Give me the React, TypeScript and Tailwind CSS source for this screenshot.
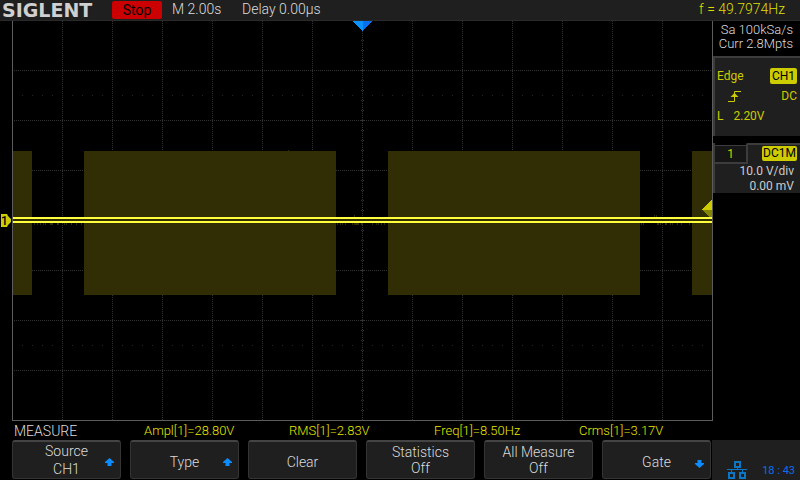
import React from 'react';
import clsx from 'clsx';

interface SoftKey {
  label: string;
  value?: string;
  arrow?: 'up' | 'down';
}

const softKeys: SoftKey[] = [
  { label: 'Source', value: 'CH1', arrow: 'up' },
  { label: 'Type', arrow: 'up' },
  { label: 'Clear' },
  { label: 'Statistics', value: 'Off' },
  { label: 'All Measure', value: 'Off' },
  { label: 'Gate', arrow: 'down' },
];

const measurements = ['Ampl[1]=28.80V', 'RMS[1]=2.83V', 'Freq[1]=8.50Hz', 'Crms[1]=3.17V'];

const columns = Array.from({ length: 13 }, (_, i) => (i + 1) * 50);
const rows = Array.from({ length: 7 }, (_, i) => 49 + i * 50);
const ticks = Array.from({ length: 38 }, (_, i) => 19 + i * 10);

// Burst envelopes: [x, width]
const bursts = [
  [1, 19],
  [72, 252],
  [376, 252],
  [680, 20],
];

// Noise specks just under the trace, between bursts
const noise = [
  [22, 1], [25, 1], [28, 1], [31, 1], [33, 1], [38, 3], [45, 2], [52, 1], [54, 1], [59, 1], [64, 1], [69, 1],
  [325, 1], [328, 1], [330, 1], [333, 1], [340, 1], [342, 5], [349, 2], [360, 1], [364, 1], [366, 1], [369, 1], [372, 1],
  [629, 1], [631, 1], [645, 2], [648, 1], [653, 2], [658, 1], [660, 1], [665, 1], [669, 1], [677, 1],
];

function Graticule() {
  return (
    <svg
      className="block h-[400px] w-full"
      viewBox="0 0 701 400"
      preserveAspectRatio="none"
      shapeRendering="crispEdges"
      role="img"
      aria-label="Channel 1 waveform"
    >
      <g stroke="#323232" strokeDasharray="1 1">
        {columns.map(x => (
          <line key={x} x1={x + 0.5} x2={x + 0.5} y1="0" y2="399" />
        ))}
        {rows.map(y => (
          <line key={y} x1="2" x2="700" y1={y + 0.5} y2={y + 0.5} />
        ))}
      </g>
      <g stroke="#262626" strokeDasharray="1 9">
        <line x1="10" x2="700" y1="74.5" y2="74.5" />
        <line x1="10" x2="700" y1="324.5" y2="324.5" />
      </g>
      {/* Minor divisions on the centre axis */}
      <g fill="#323232">
        {ticks.map(y => (
          <path key={y} d={`M349 ${y}h1v1h-1zM351 ${y}h1v1h-1z`} />
        ))}
      </g>

      {/* Waveform */}
      <g fill="#312d05">
        {bursts.map(([x, w]) => (
          <rect key={x} x={x} y="130" width={w} height="144" />
        ))}
        <rect x="276" y="129" width="1" height="1" />
        {noise.map(([x, w]) => (
          <rect key={x} x={x} y="202" width={w} height="2" />
        ))}
        <rect x="342" y="194" width="1" height="2" />
        <rect x="642" y="194" width="1" height="2" />
        <rect x="644" y="194" width="1" height="2" />
        <rect x="1" y="198" width="699" height="2" />
      </g>
      <polygon points="690,188.5 700,178.5 700,188.5" fill="#cccc00" />
      <polygon points="690,188.5 700,188.5 700,198.5" fill="#858500" />
      <rect x="1" y="196" width="699" height="2" fill="#ffff3c" />
      <rect x="1" y="200" width="699" height="2" fill="#ffff3c" />

      {/* Trigger position */}
      <polygon points="341,0 350.5,0 350.5,10" fill="#0c92ff" />
      <polygon points="350.5,0 360,0 350.5,10" fill="#0670f0" />

      <path d="M0.5 0V399.5H700.5V0" fill="none" stroke="#5c5c5c" />
    </svg>
  );
}

function ChannelMarker() {
  return (
    <svg className="block h-[13px] w-3" viewBox="0 0 12 13" role="img" aria-label="Channel 1 ground level">
      <path d="M1 0H7L8 2L11 5V8L8 11L7 13H1Z" fill="#cccc00" />
      <text x="1" y="11" fontSize="12" fontWeight="500" fill="#000">1</text>
    </svg>
  );
}

function RisingEdgeIcon() {
  return (
    <svg width="14" height="13" viewBox="0 0 14 13" fill="none" stroke="#cccc00" aria-label="Rising edge">
      <path d="M0 11.5H6.5V1.5H13" />
      <path d="M2.5 7H10.5L6.5 3Z" fill="#cccc00" stroke="none" />
    </svg>
  );
}

function NetworkIcon() {
  return (
    <svg width="20" height="18" viewBox="0 0 20 18" fill="none" stroke="#0a76c4" shapeRendering="crispEdges" aria-label="LAN">
      <path d="M8 1H13V6H8Z" strokeWidth="2" />
      <path d="M0 8.5H20M10.5 6V9M4.5 9V12M15.5 9V12" />
      <path d="M2 12H7V17H2ZM13 12H18V17H13Z" strokeWidth="2" />
    </svg>
  );
}

function ArrowIcon({ direction }: { direction: 'up' | 'down' }) {
  return (
    <svg
      className={clsx('absolute right-1.5', direction === 'up' ? 'top-4' : 'top-[18px] rotate-180')}
      width="9"
      height="8"
      viewBox="0 0 9 8"
      aria-hidden="true"
    >
      <path d="M4.5 0L9 4V5H6.5V8H2.5V5H0V4Z" fill="#0c8cff" />
    </svg>
  );
}

function SoftKeyButton({ label, value, arrow }: SoftKey) {
  return (
    <button
      type="button"
      className={clsx(
        'relative flex h-[39px] flex-1 flex-col items-center justify-center rounded-[3px] border border-t-2 border-[#343434] border-t-[#444] bg-[#1f1f1f] text-sm text-[#dcdcdc]',
        value && arrow ? 'leading-[18px]' : 'leading-4',
        !value && 'pt-[3px]'
      )}
    >
      <span>{label}</span>
      {value && <span>{value}</span>}
      {arrow && <ArrowIcon direction={arrow} />}
    </button>
  );
}

function Sidebar() {
  return (
    <aside className="w-[87px] text-xs font-normal text-[#cccccc]">
      <div className="flex h-[35px] flex-col pt-0.5 pr-[7px] text-right text-[13px] leading-[14px] font-light text-[#dcdcdc]">
        <span>Sa 100kSa/s</span>
        <span>Curr 2.8Mpts</span>
      </div>
      <section className="flex h-20 flex-col gap-1 border-t-2 border-l-2 border-[#3c3c3c] bg-[#1f1f1f] pt-[10px] pr-[3px] pl-0.5 text-[#cccc00]">
        <div className="flex h-4 items-center justify-between">
          <span>Edge</span>
          <span className="rounded-xs bg-[#cccc00] px-0.5 leading-4 text-black">CH1</span>
        </div>
        <div className="flex h-4 items-center justify-between pl-[11px]">
          <RisingEdgeIcon />
          <span>DC</span>
        </div>
        <div className="flex h-4 items-center gap-[10px]">
          <span>L</span>
          <span>2.20V</span>
        </div>
      </section>
      <section className="mt-[7px] flex h-[50px] flex-col border-l-2 border-[#3c3c3c] bg-[#1f1f1f]">
        <div className="flex h-[21px] bg-black">
          <div className="mt-0.5 w-[31px] border-t border-b-2 border-[#3c3c3c] bg-[#161616] text-center leading-4 text-[#cccc00]">
            1
          </div>
          <div className="flex flex-1 justify-end rounded-tl-xs border-t-2 border-l-2 border-[#3c3c3c] bg-[#1f1f1f] pt-px pr-[3px]">
            <span className="h-[15px] rounded-xs bg-[#cccc00] px-px leading-[15px] text-black">DC1M</span>
          </div>
        </div>
        <div className="flex flex-col pr-1.5 text-right leading-[15px]">
          <span>10.0 V/div</span>
          <span>0.00 mV</span>
        </div>
      </section>
    </aside>
  );
}

export default function App() {
  return (
    <main className="flex flex-col bg-black font-['Roboto','Liberation_Sans',sans-serif] font-light">
      <header className="flex h-[21px] items-start border-b border-[#2a2a2a] bg-[#1f1f1f] text-sm leading-[18px] text-[#dcdcdc]">
        <div className="w-28 pl-0.5 font-['DejaVu_Sans','Liberation_Sans',sans-serif] text-[19px] leading-5 font-bold text-[#d0d0d0]">
          SIGLENT
        </div>
        <div className="mt-px h-[18px] w-[50px] rounded-xs bg-[#cc0000] text-center font-normal text-black">Stop</div>
        <div className="w-20 pl-[10px]">M 2.00s</div>
        <div className="flex-1">Delay 0.00µs</div>
        <div className="pr-[15px] text-[#dede00]">f = 49.7974Hz</div>
      </header>

      <div className="flex">
        <div className="w-3 pt-[193px]">
          <ChannelMarker />
        </div>
        <div className="min-w-0 flex-1">
          <Graticule />
        </div>
        <Sidebar />
      </div>

      <div className="flex h-[19px] pl-[14px] text-[13px] leading-5">
        <div className="w-[130px] text-sm leading-5 text-[#dcdcdc]">MEASURE</div>
        {measurements.map(text => (
          <div key={text} className="w-[145px] text-[#e6e600]">
            {text}
          </div>
        ))}
      </div>

      <footer className="flex h-10 pl-3">
        <nav className="flex flex-1 gap-[9px] pr-px">
          {softKeys.map(key => (
            <SoftKeyButton key={key.label} {...key} />
          ))}
        </nav>
        <div className="flex w-[88px] items-end justify-between bg-[#1f1f1f] pr-[5px] pb-px pl-[15px]">
          <NetworkIcon />
          <time className="text-[11px] leading-4 font-normal text-[#0a6ef0]">18 : 43</time>
        </div>
      </footer>
    </main>
  );
}
